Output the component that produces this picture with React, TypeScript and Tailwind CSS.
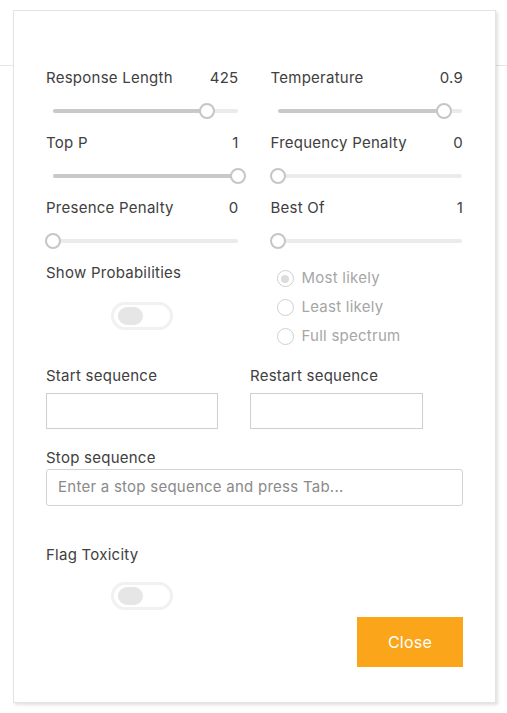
import React from "react";

type SliderProps = { label: string; value: string; pct: number };

function Slider({ label, value, pct }: SliderProps) {
  return (
    <div className="h-[65px]">
      <div className="flex h-[20px] items-center justify-between leading-[20px]">
        <span>{label}</span>
        <span>{value}</span>
      </div>
      <div className="relative mt-[16px] h-[14px] ml-[7px] mr-[1px]">
        <div className="absolute left-0 right-0 top-[5px] h-[4px] rounded-full bg-[#ebebeb]" />
        <div
          className="absolute left-0 top-[5px] h-[4px] rounded-full bg-[#c9c9c9]"
          style={{ width: `${pct}%` }}
        />
        <div
          className="absolute top-[-1px] h-[16px] w-[16px] -translate-x-1/2 rounded-full border-2 border-[#c6c6c6] bg-white"
          style={{ left: `${pct}%` }}
        />
      </div>
    </div>
  );
}

function Toggle() {
  return (
    <div className="flex h-[28px] w-[62px] items-center rounded-full border-[3px] border-[#f1f1f1] bg-white pl-[4px]">
      <div className="h-[18px] w-[25px] rounded-full bg-[#e6e6e6]" />
    </div>
  );
}

function Radio({ label, checked }: { label: string; checked?: boolean }) {
  return (
    <div className="flex h-[29px] items-center pl-[6px]">
      <div className="flex h-[17px] w-[17px] items-center justify-center rounded-full border border-[#cfcfcf]">
        {checked && <div className="h-[8px] w-[8px] rounded-full bg-[#dcdcdc]" />}
      </div>
      <span className="ml-[8px] text-[#a6a6a6]">{label}</span>
    </div>
  );
}

export default function App() {
  return (
    <div
      className="relative h-[713px] w-[507px] overflow-hidden bg-white text-[15px] tracking-[0.25px] text-[#404040]"
      style={{ fontFamily: "Inter, 'Liberation Sans', sans-serif" }}
    >
      <div className="h-[66px] border-b border-[#e6e6e6]" />
      <div className="absolute left-[13px] top-[10px] h-[693px] w-[483px] border border-[#e3e3e3] bg-white px-[32px] pt-[57px] shadow-[2px_2px_3px_rgba(0,0,0,0.12)]">
        <div className="grid grid-cols-2 gap-x-[32px]">
          <Slider label="Response Length" value="425" pct={83.5} />
          <Slider label="Temperature" value="0.9" pct={90.5} />
          <Slider label="Top P" value="1" pct={100} />
          <Slider label="Frequency Penalty" value="0" pct={0} />
          <Slider label="Presence Penalty" value="0" pct={0} />
          <Slider label="Best Of" value="1" pct={0} />
        </div>
        <div className="grid grid-cols-2 gap-x-[32px]">
          <div>
            <div className="h-[20px] leading-[20px]">Show Probabilities</div>
            <div className="mt-[19px] flex justify-center">
              <Toggle />
            </div>
          </div>
          <div className="mt-[1px]">
            <Radio label="Most likely" checked />
            <Radio label="Least likely" />
            <Radio label="Full spectrum" />
          </div>
        </div>
        <div className="mt-[15px] flex gap-[32px]">
          <div className="w-[172px]">
            <div className="h-[20px] leading-[20px]">Start sequence</div>
            <div className="mt-[7px] h-[36px] border border-[#cfcfcf]" />
          </div>
          <div className="w-[173px]">
            <div className="h-[20px] leading-[20px]">Restart sequence</div>
            <div className="mt-[7px] h-[36px] border border-[#cfcfcf]" />
          </div>
        </div>
        <div className="mt-[19px]">
          <div className="h-[20px] leading-[20px]">Stop sequence</div>
          <div className="mt-[1px] flex h-[37px] items-center rounded-[3px] border border-[#d3d3d3] px-[11px] text-[#8a8a8a]">
            Enter a stop sequence and press Tab...
          </div>
        </div>
        <div className="mt-[39px] grid grid-cols-2 gap-x-[32px]">
          <div>
            <div className="h-[20px] leading-[20px]">Flag Toxicity</div>
            <div className="mt-[17px] flex justify-center">
              <Toggle />
            </div>
          </div>
        </div>
        <div className="mt-[7px] flex justify-end">
          <button className="h-[50px] w-[106px] bg-[#fba51a] text-[16px] text-white">Close</button>
        </div>
      </div>
    </div>
  );
}
